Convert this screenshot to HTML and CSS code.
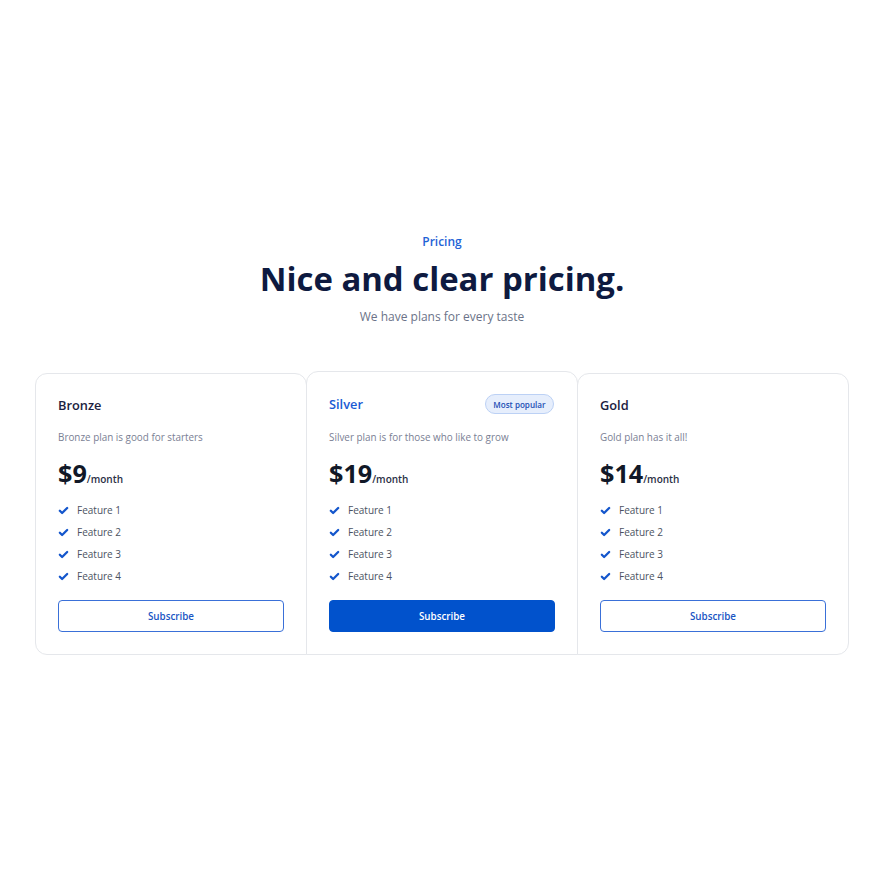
FILE: index.html
```html
<!DOCTYPE html>
<html lang="en">
<head>
<meta charset="utf-8">
<title>Pricing</title>
<link rel="stylesheet" href="styles.css">
</head>
<body>
<section class="pricing">
  <header class="intro">
    <p class="eyebrow">Pricing</p>
    <h1 class="title">Nice and clear pricing.</h1>
    <p class="subtitle">We have plans for every taste</p>
  </header>
  <div class="plans">
    <article class="plan">
      <div class="plan-head"><h2 class="plan-name">Bronze</h2></div>
      <p class="plan-desc">Bronze plan is good for starters</p>
      <p class="price"><span class="amount">$9</span><span class="period">/month</span></p>
      <ul class="features">
        <li><svg class="check" viewBox="0 0 24 24"><path d="M4 12.5l5 5L20 6.5"/></svg>Feature 1</li>
        <li><svg class="check" viewBox="0 0 24 24"><path d="M4 12.5l5 5L20 6.5"/></svg>Feature 2</li>
        <li><svg class="check" viewBox="0 0 24 24"><path d="M4 12.5l5 5L20 6.5"/></svg>Feature 3</li>
        <li><svg class="check" viewBox="0 0 24 24"><path d="M4 12.5l5 5L20 6.5"/></svg>Feature 4</li>
      </ul>
      <button class="btn btn-outline">Subscribe</button>
    </article>
    <article class="plan plan-featured">
      <div class="plan-head"><h2 class="plan-name plan-name-blue">Silver</h2><span class="badge">Most popular</span></div>
      <p class="plan-desc">Silver plan is for those who like to grow</p>
      <p class="price"><span class="amount">$19</span><span class="period">/month</span></p>
      <ul class="features">
        <li><svg class="check" viewBox="0 0 24 24"><path d="M4 12.5l5 5L20 6.5"/></svg>Feature 1</li>
        <li><svg class="check" viewBox="0 0 24 24"><path d="M4 12.5l5 5L20 6.5"/></svg>Feature 2</li>
        <li><svg class="check" viewBox="0 0 24 24"><path d="M4 12.5l5 5L20 6.5"/></svg>Feature 3</li>
        <li><svg class="check" viewBox="0 0 24 24"><path d="M4 12.5l5 5L20 6.5"/></svg>Feature 4</li>
      </ul>
      <button class="btn btn-solid">Subscribe</button>
    </article>
    <article class="plan">
      <div class="plan-head"><h2 class="plan-name">Gold</h2></div>
      <p class="plan-desc">Gold plan has it all!</p>
      <p class="price"><span class="amount">$14</span><span class="period">/month</span></p>
      <ul class="features">
        <li><svg class="check" viewBox="0 0 24 24"><path d="M4 12.5l5 5L20 6.5"/></svg>Feature 1</li>
        <li><svg class="check" viewBox="0 0 24 24"><path d="M4 12.5l5 5L20 6.5"/></svg>Feature 2</li>
        <li><svg class="check" viewBox="0 0 24 24"><path d="M4 12.5l5 5L20 6.5"/></svg>Feature 3</li>
        <li><svg class="check" viewBox="0 0 24 24"><path d="M4 12.5l5 5L20 6.5"/></svg>Feature 4</li>
      </ul>
      <button class="btn btn-outline">Subscribe</button>
    </article>
  </div>
</section>
</body>
</html>
```
FILE: styles.css
```css
* { box-sizing: border-box; }
html, body { margin: 0; padding: 0; background: #ffffff; }
body { font-family: "Open Sans", "Noto Sans", sans-serif; color: #1f2937; }

.pricing { padding-top: 232px; }

.intro { text-align: center; }
.eyebrow {
  margin: 0;
  font-size: 12px;
  line-height: 20px;
  font-weight: 600;
  color: #1f63d6;
}
.title {
  margin: 7px 0 0;
  font-size: 32.9px;
  line-height: 40px;
  font-weight: 700;
  color: #0e1a40;
}
.subtitle {
  margin: 8px 0 0;
  font-size: 12px;
  line-height: 20px;
  color: #6b7388;
}

.plans {
  width: 814px;
  margin: 44px auto 0;
  display: flex;
  align-items: flex-end;
}
.plan {
  flex: 1 1 0;
  min-width: 0;
  border: 1px solid #e5e7eb;
  border-radius: 12px 12px 0 0;
  padding: 22px;
  background: #fff;
}
.plan + .plan { margin-left: -1px; }
.plan:first-child { border-bottom-left-radius: 12px; }
.plan:last-child { border-bottom-right-radius: 12px; }

.plan-head {
  display: flex;
  align-items: center;
  justify-content: space-between;
}
.plan-name {
  margin: 0;
  font-size: 12.8px;
  line-height: 18px;
  font-weight: 600;
  color: #1b2140;
}
.plan-name-blue { color: #1a5ad4; }
.badge {
  display: inline-flex;
  align-items: center;
  height: 20px;
  padding: 0 7.5px;
  margin-right: 1px;
  border: 1px solid #bcd1f5;
  background: #e6eefc;
  border-radius: 999px;
  font-size: 8.1px;
  font-weight: 600;
  color: #1d4fb5;
}
.plan-desc {
  margin: 16px 0 0;
  font-size: 9.9px;
  line-height: 14px;
  color: #7a8094;
}
.price {
  margin: 14px 0 0;
  line-height: 30px;
  color: #111827;
}
.amount {
  font-size: 25.2px;
  font-weight: 700;
}
.period {
  font-size: 10px;
  line-height: 1;
  font-weight: 600;
  color: #2a2f45;
}
.features {
  list-style: none;
  margin: 11px 0 0;
  padding: 0;
  display: flex;
  flex-direction: column;
  gap: 8px;
}
.features li {
  display: flex;
  align-items: center;
  gap: 8px;
  font-size: 10px;
  line-height: 14px;
  color: #4b5262;
}
.check {
  width: 11px;
  height: 11px;
  flex: none;
  fill: none;
  stroke: #1456cc;
  stroke-width: 5;
  stroke-linecap: round;
  stroke-linejoin: round;
}
.btn {
  display: block;
  width: 100%;
  margin-top: 17px;
  height: 32px;
  border-radius: 4px;
  font-family: inherit;
  font-size: 9.8px;
  font-weight: 600;
  cursor: pointer;
}
.btn-outline {
  background: #fff;
  border: 1px solid #3a70d8;
  color: #1a55c4;
}
.btn-solid {
  background: #0152cc;
  border: 1px solid #0152cc;
  color: #fff;
}
```
